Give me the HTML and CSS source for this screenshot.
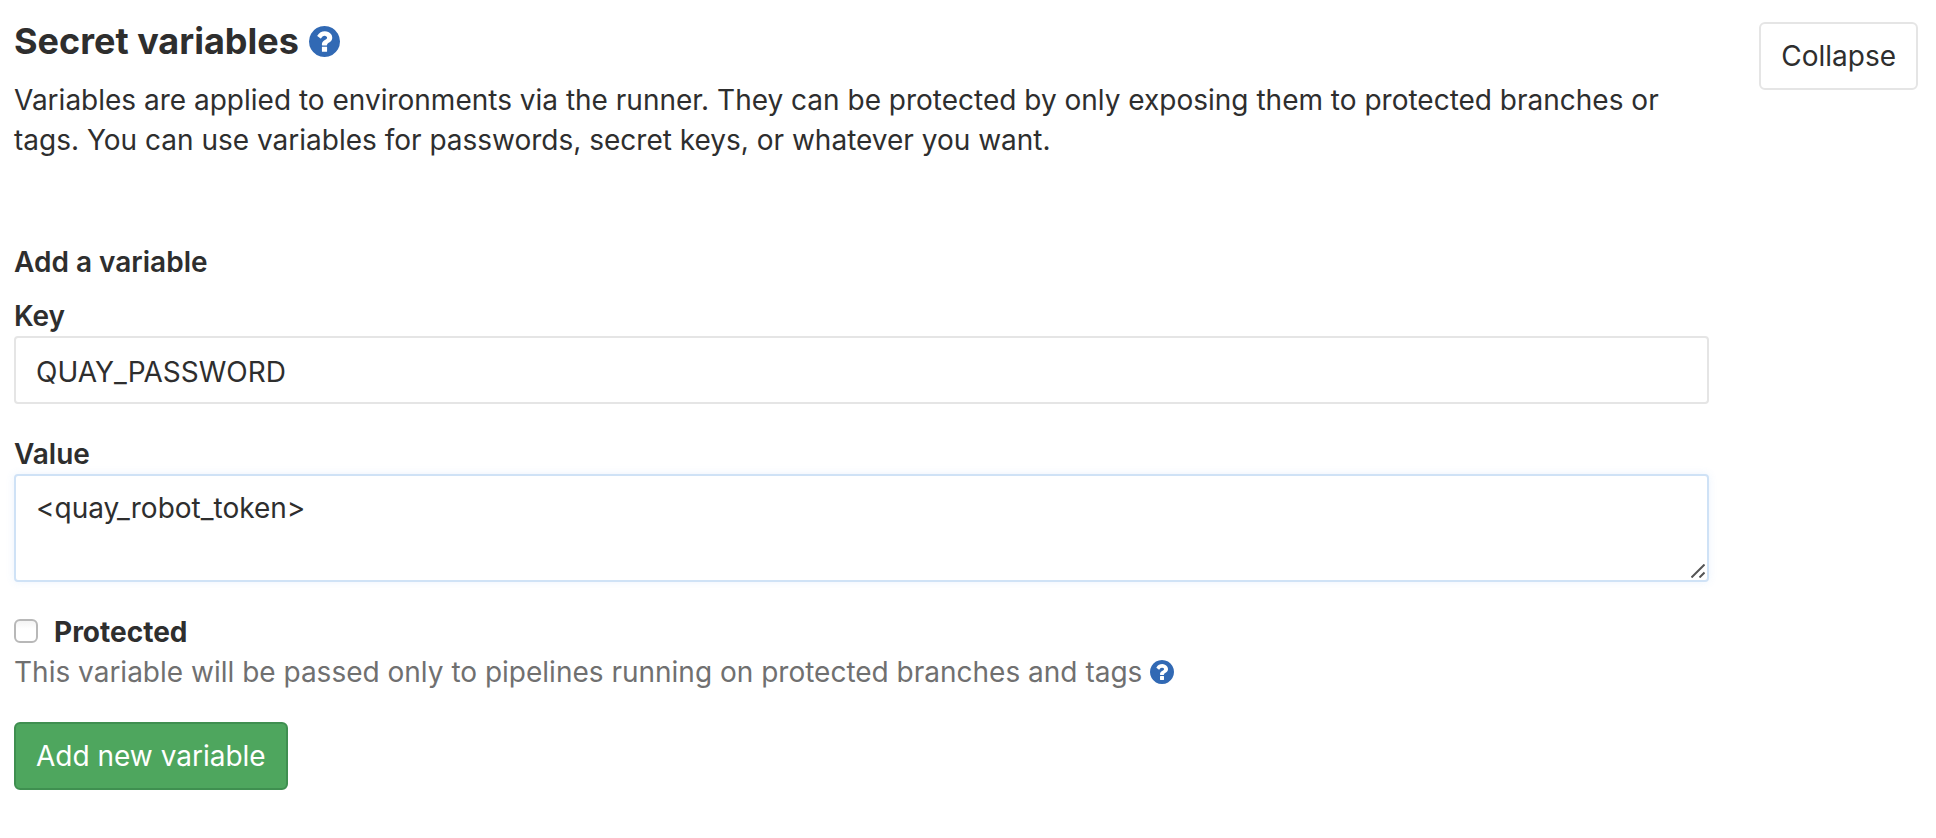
FILE: index.html
```html
<!DOCTYPE html>
<html lang="en">
<head>
<meta charset="utf-8">
<title>Secret variables</title>
<link rel="stylesheet" href="styles.css">
</head>
<body>
<svg class="sprite" aria-hidden="true">
  <symbol id="question-circle" viewBox="128 128 1536 1536">
    <path d="M1024 1376v-192q0-14-9-23t-23-9h-192q-14 0-23 9t-9 23v192q0 14 9 23t23 9h192q14 0 23-9t9-23zm256-672q0-88-55.500-163t-138.500-116-170-41q-243 0-371 213-15 24 8 42l132 100q7 6 19 6 16 0 25-12 53-68 86-92 34-24 86-24 48 0 85.500 26t37.500 59q0 38-20 61t-68 45q-63 28-115.500 86.500t-52.500 125.500v36q0 14 9 23t23 9h192q14 0 23-9t9-23q0-19 21.500-49.500t54.500-49.500q32-18 49-28.500t46-35 44.500-48 28-60.500 12.500-81zm384 192q0 209-103 385.500t-279.500 279.500-385.500 103-385.500-103-279.500-279.500-103-385.500 103-385.500 279.500-279.500 385.500-103 385.500 103 279.500 279.500 103 385.500z"/>
  </symbol>
</svg>
<main class="settings">
  <div class="content">
    <header>
      <h1 class="title">Secret variables
        <a class="help-link help-link-large" href="#" aria-label="Help with secret variables"><svg><use href="#question-circle"/></svg></a>
      </h1>
      <p class="description">Variables are applied to environments via the runner. They can be protected by only exposing them to protected branches or tags. You can use variables for passwords, secret keys, or whatever you want.</p>
    </header>
    <form class="form">
      <h2 class="subtitle">Add a variable</h2>
      <div class="group">
        <label class="label" for="key">Key</label>
        <input class="control control-text" id="key" type="text" value="QUAY_PASSWORD">
      </div>
      <div class="group">
        <label class="label" for="value">Value</label>
        <div class="area">
          <textarea class="control control-area" id="value" spellcheck="false">&lt;quay_robot_token&gt;</textarea>
          <svg class="grip" viewBox="0 0 14 14" aria-hidden="true"><path d="M0.500 13.500L13.500 0.500M8.500 13.500L13.500 8.500"/></svg>
        </div>
      </div>
      <div class="group">
        <label class="check-label" for="protected"><input class="check" id="protected" type="checkbox">Protected</label>
        <p class="hint">This variable will be passed only to pipelines running on protected branches and tags
          <a class="help-link" href="#" aria-label="Help with protected variables"><svg><use href="#question-circle"/></svg></a>
        </p>
      </div>
      <button class="button button-success" type="submit">Add new variable</button>
    </form>
  </div>
  <button class="button" type="button">Collapse</button>
</main>
</body>
</html>
```
FILE: styles.css
```css
* {
  box-sizing: border-box;
}

body {
  margin: 0;
  background: #fff;
  color: #2e2e2e;
  font-family: Inter, "Liberation Sans", sans-serif;
  font-size: 28px;
  line-height: 40px;
}

.sprite {
  display: none;
}

.settings {
  display: grid;
  grid-template-columns: minmax(0, 1fr) auto;
  align-items: start;
  column-gap: 50px;
  padding: 22px 18px 48px 14px;
}

.title,
.subtitle,
.description,
.hint {
  margin: 0;
}

.title {
  display: flex;
  align-items: center;
  gap: 10px;
  margin: -1px 0 19px;
  font-size: 36px;
  font-weight: 700;
}

.help-link {
  display: inline-flex;
  color: #3169b4;
}

.help-link svg {
  width: 24px;
  height: 24px;
  fill: currentColor;
}

.help-link-large svg {
  width: 31px;
  height: 31px;
}

.form {
  display: flex;
  flex-direction: column;
  align-items: flex-start;
  gap: 30px;
  margin-top: 82px;
}

.subtitle {
  margin-bottom: -16px;
  font-size: 28px;
  font-weight: 600;
}

.group {
  width: 100%;
}

.label {
  display: block;
  font-weight: 600;
}

.control {
  display: block;
  width: 100%;
  padding: 12px 20px;
  border: 2px solid #e5e5e5;
  border-radius: 4px;
  background: #fff;
  color: inherit;
  font: inherit;
  outline: none;
}

.control-text {
  height: 68px;
  padding-top: 14px;
  padding-bottom: 10px;
}

.area {
  position: relative;
}

.control-area {
  height: 108px;
  border-color: #cfe2f6;
  box-shadow: 0 0 8px rgba(90, 160, 240, 0.12);
  resize: none;
}

.grip {
  position: absolute;
  right: 4px;
  bottom: 4px;
  width: 14px;
  height: 14px;
  fill: none;
  stroke: #555;
  stroke-width: 2;
}

.check-label {
  display: flex;
  align-items: center;
  gap: 16px;
  width: fit-content;
  font-weight: 700;
}

.check {
  width: 24px;
  height: 24px;
  margin: 0 0 2px;
  border: 2px solid #b8b8b8;
  border-radius: 6px;
  background: linear-gradient(#f4f4f4, #fff 40%);
  appearance: none;
}

.check:checked {
  background: #3169b4;
}

.hint {
  display: flex;
  align-items: center;
  gap: 8px;
  color: #707070;
}

.button {
  padding: 12px 20px;
  border: 2px solid #e5e5e5;
  border-radius: 6px;
  background: #fff;
  color: inherit;
  font: inherit;
}

.button-success {
  border-color: #3f8f50;
  background: #4ea65e;
  color: #fff;
}
```
